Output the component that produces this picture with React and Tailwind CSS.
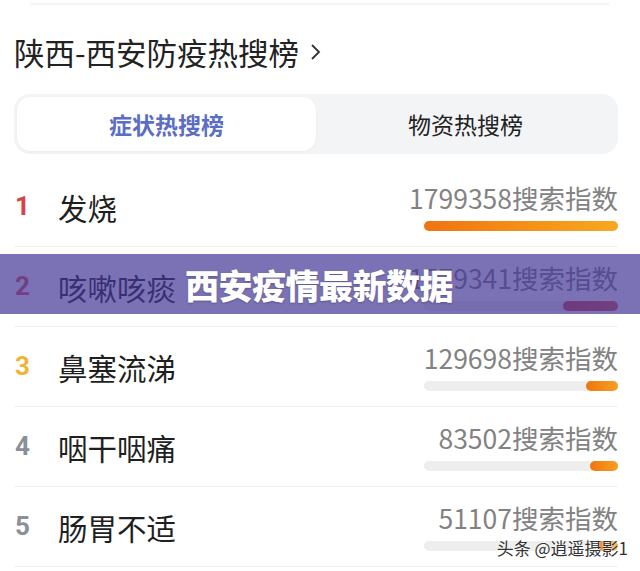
const items = [
  { rank: 1, name: '发烧', count: '1799358', fill: 194, rankColor: 'text-[#d9404a]', barColor: 'bg-gradient-to-r from-[#f07410] to-[#f6a820]' },
  { rank: 2, name: '咳嗽咳痰', count: '1579341', fill: 55, rankColor: 'text-[#e8555a]', barColor: 'bg-gradient-to-r from-[#d8404a] to-[#e05a50]' },
  { rank: 3, name: '鼻塞流涕', count: '129698', fill: 32, rankColor: 'text-[#f2b437]', barColor: 'bg-gradient-to-r from-[#f07410] to-[#f6a020]' },
  { rank: 4, name: '咽干咽痛', count: '83502', fill: 28, rankColor: 'text-[#8a8f99]', barColor: 'bg-gradient-to-r from-[#f07410] to-[#f6a020]' },
  { rank: 5, name: '肠胃不适', count: '51107', fill: 20, rankColor: 'text-[#8a8f99]', barColor: 'bg-gradient-to-r from-[#f07410] to-[#f6a020]' },
];

const Row = ({ item }) => (
  <div className="h-[80px] flex items-center justify-between border-b border-[#f1f1f1]">
    <div className="flex items-center">
      <span className={`w-[44px] pl-[1px] text-[26px] font-bold font-['Roboto',sans-serif] ${item.rankColor}`}>
        {item.rank}
      </span>
      <span className="text-[29.5px] leading-[40px] text-[#1f1f1f]">{item.name}</span>
    </div>
    <div className="flex flex-col items-end">
      <span className="text-[26.5px] leading-[32px] text-[#828282]">
        {item.count}搜索指数
      </span>
      <div className="mt-[7px] w-[194px] h-[10px] rounded-full bg-[#eeeeee] flex justify-end">
        <div className={`h-full rounded-full ${item.barColor}`} style={{ width: item.fill }} />
      </div>
    </div>
  </div>
);

const App = () => {
  return (
    <div className="w-[640px] h-[571px] bg-white relative overflow-hidden font-['Noto_Sans_CJK_SC',sans-serif]">
      <div className="mx-[30px] h-[3px] rounded-b-[12px] shadow-[0_1px_3px_rgba(0,0,0,0.08)]" />

      <div className="pl-[14px] pr-[22px]">
        <h1 className="mt-[29px] text-[30.5px] leading-[40px] text-[#222] flex items-center">
          陕西-西安防疫热搜榜
          <svg className="ml-[10px] w-[14px] h-[22px]" viewBox="0 0 14 22" fill="none" stroke="#333" strokeWidth="1.8">
            <path d="M3 4 L10 11 L3 18" />
          </svg>
        </h1>

        <div className="mt-[22px] h-[60px] rounded-[16px] bg-[#f3f4f6] p-[3px] flex">
          <div className="flex-1 rounded-[14px] bg-white shadow-[0_1px_3px_rgba(0,0,0,0.04)] flex items-center justify-center text-[23px] font-bold text-[#5b6ec4]">
            症状热搜榜
          </div>
          <div className="flex-1 flex items-center justify-center text-[23px] text-[#222]">
            物资热搜榜
          </div>
        </div>

        <div className="mt-[13px]">
          {items.map((item) => (
            <Row key={item.rank} item={item} />
          ))}
        </div>
      </div>

      <div className="absolute left-0 right-0 top-[254px] h-[60px] bg-[#423694]/70 flex items-center pl-[185px]">
        <span className="text-[34px] font-black text-white tracking-[-0.5px] [text-shadow:0_1px_2px_rgba(0,0,0,0.25)]">
          西安疫情最新数据
        </span>
      </div>

      <div className="absolute right-[12px] top-[536px] text-[17px] leading-[24px] text-[#333] [text-shadow:0_0_2px_#fff,0_0_2px_#fff]">
        头条 @逍遥摄影1
      </div>
    </div>
  );
};

export default App;
